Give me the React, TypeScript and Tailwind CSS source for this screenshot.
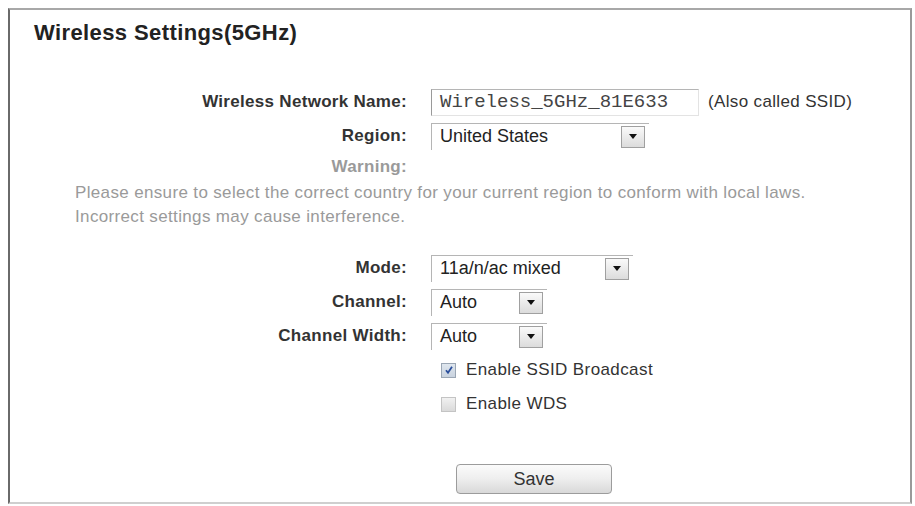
import { useState } from "react";

const font = { fontFamily: '"Liberation Sans", Arial, sans-serif' };

function Label({ text, muted }: { text: string; muted?: boolean }) {
  return (
    <div
      className={`w-[397px] shrink-0 text-right text-[17px] font-bold tracking-[0.3px] ${
        muted ? "text-[#9a9a9a]" : "text-[#333]"
      }`}
    >
      {text}
    </div>
  );
}

function Dropdown({ value, width }: { value: string; width: string }) {
  return (
    <div
      className={`${width} h-[27px] flex items-center justify-between border-t border-l border-[#b5b5b5] bg-white pl-[8px] pr-[4px]`}
    >
      <span className="text-[18px] text-[#222]">{value}</span>
      <span className="w-[24px] h-[22px] flex items-center justify-center border border-[#a0a0a0] bg-gradient-to-b from-[#fafafa] to-[#dcdcdc]">
        <svg width="8" height="5" viewBox="0 0 8 5">
          <path d="M0 0h8L4 5z" fill="#111" />
        </svg>
      </span>
    </div>
  );
}

function Check({ checked, label }: { checked: boolean; label: string }) {
  return (
    <div className="flex items-center h-[34px] pl-[431px]">
      <span
        className={`w-[15px] h-[15px] flex items-center justify-center border ${
          checked ? "border-[#9aa6b4] bg-gradient-to-b from-[#dfe6ee] to-[#c9d3df]" : "border-[#c4c4c4] bg-gradient-to-b from-[#f1f1f1] to-[#dadada]"
        }`}
      >
        {checked && (
          <svg width="10" height="10" viewBox="0 0 10 10">
            <path d="M2 5.2l2 2.6L8 1.8" stroke="#2b4f9c" strokeWidth="1.8" fill="none" />
          </svg>
        )}
      </span>
      <span className="ml-[10px] text-[17px] tracking-[0.4px] text-[#333]">{label}</span>
    </div>
  );
}

export default function App() {
  const [ssid] = useState("Wireless_5GHz_81E633");

  return (
    <div className="w-[915px] h-[506px] bg-white overflow-hidden pt-[8px] pl-[8px]" style={font}>
      <div className="w-[904px] h-[496px] border-l-2 border-t-2 border-r-2 border-b-2 border-l-[#6a6a6a] border-t-[#a8a8a8] border-r-[#9a9a9a] border-b-[#cfcfcf]">
        {/* header */}
        <div className="h-[45px] flex items-center pl-[24px] text-[22px] font-bold tracking-[0.4px] text-[#222]">
          Wireless Settings(5GHz)
        </div>

        <div className="h-[30px]" />

        {/* SSID */}
        <div className="flex items-center h-[34px]">
          <Label text="Wireless Network Name:" />
          <div className="ml-[24px] w-[268px] h-[27px] flex items-center border-t border-l border-t-[#b5b5b5] border-l-[#9a9a9a] border-r border-b border-r-[#e3e3e3] border-b-[#e3e3e3] pl-[8px]">
            <span
              className="text-[19px] text-[#444]"
              style={{ fontFamily: '"Liberation Mono", "Courier New", monospace' }}
            >
              {ssid}
            </span>
          </div>
          <span className="ml-[9px] text-[17px] tracking-[0.35px] text-[#333]">(Also called SSID)</span>
        </div>

        {/* Region */}
        <div className="flex items-center h-[34px]">
          <Label text="Region:" />
          <div className="ml-[24px]">
            <Dropdown value="United States" width="w-[218px]" />
          </div>
        </div>

        <div className="flex items-center h-[28px]">
          <Label text="Warning:" muted />
        </div>
        <div className="pl-[65px] text-[17px] tracking-[0.35px] leading-[24px] text-[#9a9a9a]">
          <div>Please ensure to select the correct country for your current region to conform with local laws.</div>
          <div>Incorrect settings may cause interference.</div>
        </div>

        <div className="h-[22px]" />

        <div className="flex items-center h-[34px]">
          <Label text="Mode:" />
          <div className="ml-[24px]">
            <Dropdown value="11a/n/ac mixed" width="w-[202px]" />
          </div>
        </div>
        <div className="flex items-center h-[34px]">
          <Label text="Channel:" />
          <div className="ml-[24px]">
            <Dropdown value="Auto" width="w-[116px]" />
          </div>
        </div>
        <div className="flex items-center h-[34px]">
          <Label text="Channel Width:" />
          <div className="ml-[24px]">
            <Dropdown value="Auto" width="w-[116px]" />
          </div>
        </div>

        <Check checked label="Enable SSID Broadcast" />
        <Check checked={false} label="Enable WDS" />

        <div className="h-[43px]" />

        <div className="pl-[446px]">
          <button className="w-[156px] h-[30px] rounded-[4px] border border-[#9c9c9c] bg-gradient-to-b from-[#fbfbfb] via-[#eeeeee] to-[#d9d9d9] text-[18px] text-[#333]">
            Save
          </button>
        </div>
      </div>
    </div>
  );
}
